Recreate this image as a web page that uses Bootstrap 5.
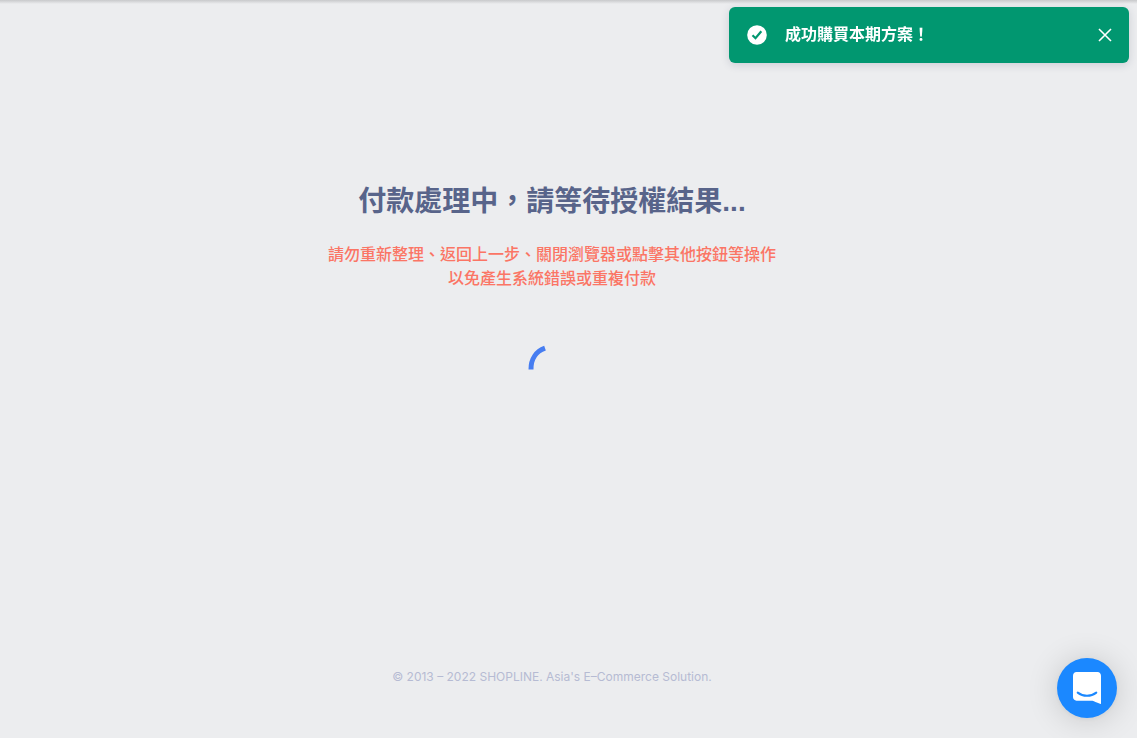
<!DOCTYPE html>
<html lang="zh-Hant">
<head>
<meta charset="utf-8">
<meta name="viewport" content="width=device-width, initial-scale=1">
<title>付款處理中</title>
<link href="https://cdn.jsdelivr.net/npm/bootstrap@5.3.0/dist/css/bootstrap.min.css" rel="stylesheet">
<style>
  body { background: #ecedef; font-family: "Liberation Sans", "Noto Sans CJK TC", sans-serif; }
  .page-top { height: 4px; background: linear-gradient(#c8c9cb, #ecedef); }
  .content { padding: 178px 33px 49px 0; }
  .heading { font-size: 28px; line-height: 40px; font-weight: 700; color: #58648a; margin-bottom: 19px; }
  .warning { font-family: "Noto Sans CJK TC", sans-serif; font-size: 16px; line-height: 24px; font-weight: 500; color: #fb7565; }
  .loader { width: 48px; height: 48px; margin-top: 56px; }
  .copyright { font-family: Inter, sans-serif; font-size: 12px; line-height: 24px; font-weight: 400; color: #b6bbd3; }
  .notice { width: 400px; max-width: calc(100% - 16px); margin: 7px 8px; padding: 0 16px; height: 56px; border: 0; border-radius: 6px; background: #019770; color: #fff; box-shadow: 0 2px 8px rgba(40, 50, 80, .16); }
  .notice-icon { margin-left: 2px; }
  .notice-text { font-size: 16px; line-height: 24px; font-weight: 700; margin-left: 18px; }
  .notice-close { width: 16px; height: 16px; }
  .chat { width: 60px; height: 60px; margin: 20px; background: #1b88ff; box-shadow: 0 1px 6px rgba(0, 0, 0, .06), 0 2px 32px rgba(0, 0, 0, .16); }
</style>
</head>
<body>
<div class="min-vh-100 d-flex flex-column">
  <div class="page-top"></div>
  <main class="content flex-grow-1 d-flex flex-column align-items-center text-center">
    <h1 class="heading">付款處理中，請等待授權結果...</h1>
    <p class="warning mb-0">請勿重新整理、返回上一步、關閉瀏覽器或點擊其他按鈕等操作<br>以免產生系統錯誤或重複付款</p>
    <div class="loader" role="status" aria-label="處理中">
      <svg class="d-block" width="48" height="48" viewBox="0 0 48 48" fill="none" aria-hidden="true"><path d="M3 24.500C2.800 14 8.300 6.300 17 3.200" stroke="#467df1" stroke-width="5"/></svg>
    </div>
    <footer class="copyright mt-auto">© 2013 – 2022 SHOPLINE. Asia's E–Commerce Solution.</footer>
  </main>
</div>

<div class="notice position-fixed top-0 end-0 d-flex align-items-center" role="alert">
  <svg class="notice-icon" width="20" height="20" viewBox="0 0 20 20" aria-hidden="true"><circle cx="10" cy="10" r="9.800" fill="#fff"/><path d="M5.500 10.200l3 3 5.800-7" fill="none" stroke="#019770" stroke-width="2.200"/></svg>
  <span class="notice-text">成功購買本期方案！</span>
  <button type="button" class="notice-close btn p-0 border-0 ms-auto d-flex" aria-label="關閉">
    <svg width="16" height="16" viewBox="0 0 16 16" aria-hidden="true"><path d="M2 2l12 12M14 2L2 14" stroke="#fff" stroke-width="1.600"/></svg>
  </button>
</div>

<button type="button" class="chat btn rounded-circle border-0 p-0 position-fixed bottom-0 end-0 d-flex align-items-center justify-content-center" aria-label="聊天">
  <svg width="28" height="32" viewBox="0 0 28 32" aria-hidden="true"><path d="M28 32s-4.714-1.855-8.527-3.340H3.437C1.540 28.660 0 27.026 0 25.013V3.644C0 1.633 1.540 0 3.437 0h21.125c1.898 0 3.437 1.632 3.437 3.645v18.404H28V32z" fill="#fff"/><path d="M4.700 20.600c5.300 4.200 13.300 4.200 18.600 0" fill="none" stroke="#1b88ff" stroke-width="2" stroke-linecap="round"/></svg>
</button>
<script src="https://cdn.jsdelivr.net/npm/bootstrap@5.3.0/dist/js/bootstrap.bundle.min.js"></script>
</body>
</html>
